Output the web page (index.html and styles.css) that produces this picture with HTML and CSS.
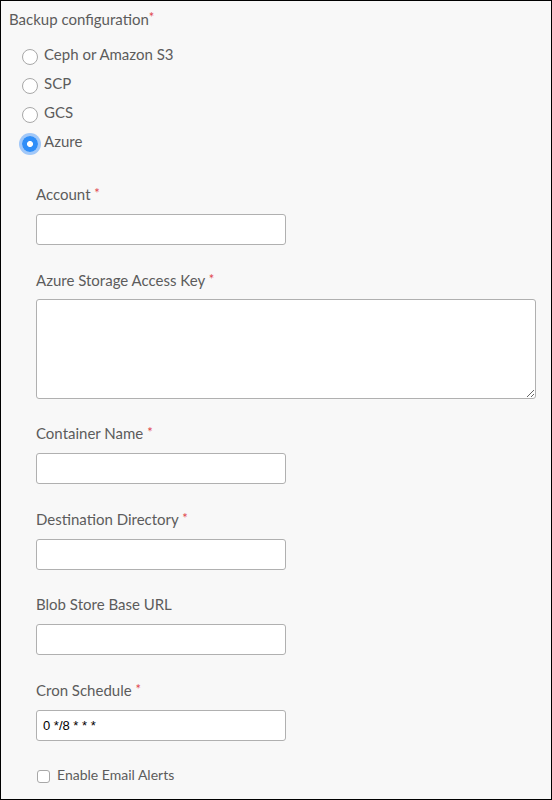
FILE: index.html
```html
<!DOCTYPE html>
<html>
<head>
<meta charset="utf-8">
<link rel="stylesheet" href="styles.css">
</head>
<body>
<div class="panel">
  <div class="title">Backup configuration<span class="req">*</span></div>
  <div class="radios">
    <label class="radio"><input type="radio" name="t"><span>Ceph or Amazon S3</span></label>
    <label class="radio"><input type="radio" name="t"><span>SCP</span></label>
    <label class="radio"><input type="radio" name="t"><span>GCS</span></label>
    <label class="radio"><input type="radio" name="t" checked><span>Azure</span></label>
  </div>
  <div class="fields">
    <div class="field">
      <div class="label">Account <span class="req">*</span></div>
      <input class="input" type="text">
    </div>
    <div class="field field-area">
      <div class="label">Azure Storage Access Key <span class="req">*</span></div>
      <textarea class="textarea"></textarea>
    </div>
    <div class="field">
      <div class="label">Container Name <span class="req">*</span></div>
      <input class="input" type="text">
    </div>
    <div class="field">
      <div class="label">Destination Directory <span class="req">*</span></div>
      <input class="input" type="text">
    </div>
    <div class="field">
      <div class="label">Blob Store Base URL</div>
      <input class="input" type="text">
    </div>
    <div class="field">
      <div class="label">Cron Schedule <span class="req">*</span></div>
      <input class="input" type="text" value="0 */8 * * *">
    </div>
    <label class="check"><input type="checkbox"><span>Enable Email Alerts</span></label>
  </div>
</div>
</body>
</html>
```
FILE: styles.css
```css
html, body { margin: 0; padding: 0; }
body { font-family: "Lato", "Liberation Sans", sans-serif; color: #5c5c5c; }
.panel {
  box-sizing: border-box;
  width: 552px;
  height: 800px;
  border: 1px solid #000;
  background: #f8f8f8;
  padding: 6px 0 0 8px;
}
.title { font-size: 15px; line-height: 20px; }
.req { color: #e0474c; font-size: 13px; vertical-align: 3px; }
.radios { display: flex; flex-direction: column; padding: 18px 0 0 13px; gap: 9px; }
.radio { display: flex; align-items: center; gap: 6px; font-size: 15px; line-height: 20px; }
.radio span { position: relative; top: -3px; }
.radio input {
  appearance: none; -webkit-appearance: none;
  margin: 0; width: 16px; height: 16px; border-radius: 50%;
  border: 1px solid #a8a8a8; background: #fff; box-sizing: border-box;
}
.radio input:checked {
  border: none;
  background: radial-gradient(circle, #fff 0 2.6px, #2f8ef8 3.4px);
  box-shadow: 0 0 0 3px rgba(90, 160, 250, 0.55);
}
.fields { padding: 29px 0 0 27px; display: flex; flex-direction: column; }
.field { display: flex; flex-direction: column; align-items: flex-start; margin-bottom: 24px; }
.field-area { margin-bottom: 23px; }
.field-area .label { margin-bottom: 9px; }
.label { font-size: 15px; line-height: 20px; margin-bottom: 10px; }
.label .req { vertical-align: 2px; }
.input, .textarea {
  box-sizing: border-box; margin: 0;
  border: 1px solid #b0b0b0; border-radius: 3px; background: #fff;
  font-family: "Liberation Sans", Arial, sans-serif; font-size: 13px; color: #000;
  padding: 0 6px;
}
.input { width: 250px; height: 31px; }
.textarea { width: 500px; height: 100px; resize: vertical; }
.check { display: flex; align-items: center; gap: 7px; font-size: 14px; line-height: 18px; padding-left: 1px; margin-top: 1px; }
.check input {
  appearance: none; -webkit-appearance: none;
  margin: 2px 0 0 0; width: 13px; height: 13px; box-sizing: border-box;
  border: 1px solid #a8a8a8; border-radius: 3px; background: #fff;
}
```
